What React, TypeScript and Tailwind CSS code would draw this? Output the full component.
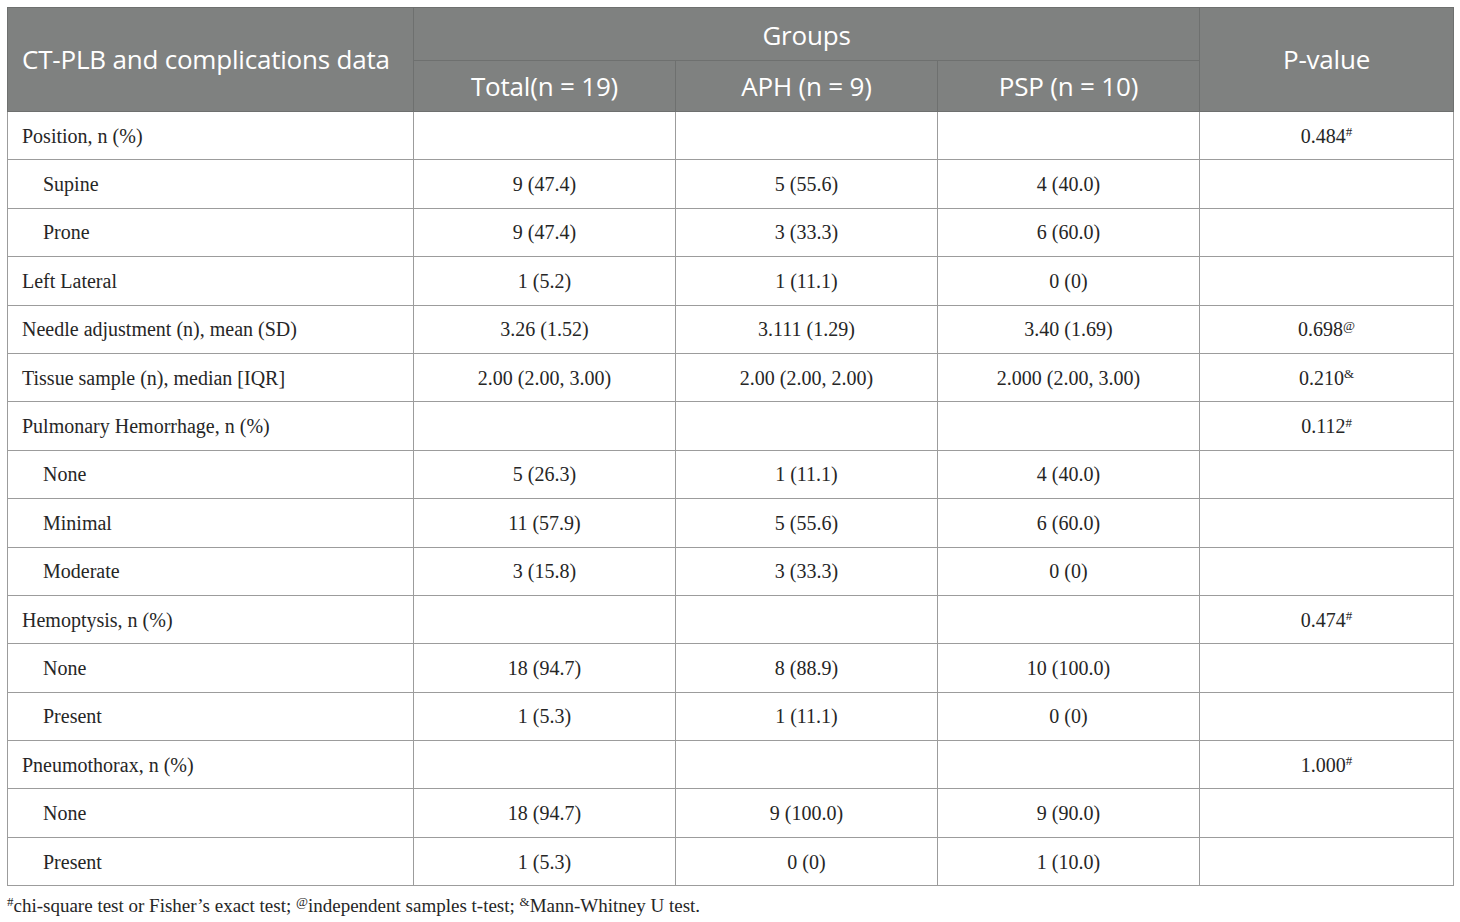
import type { ReactElement } from 'react';

type Row = {
    label: string;
    indent?: boolean;
    total?: string;
    aph?: string;
    psp?: string;
    p?: string;
    mark?: string;
};

const rows: Row[] = [
    { label: 'Position, n (%)', p: '0.484', mark: '#' },
    { label: 'Supine', indent: true, total: '9 (47.4)', aph: '5 (55.6)', psp: '4 (40.0)' },
    { label: 'Prone', indent: true, total: '9 (47.4)', aph: '3 (33.3)', psp: '6 (60.0)' },
    { label: 'Left Lateral', total: '1 (5.2)', aph: '1 (11.1)', psp: '0 (0)' },
    { label: 'Needle adjustment (n), mean (SD)', total: '3.26 (1.52)', aph: '3.111 (1.29)', psp: '3.40 (1.69)', p: '0.698', mark: '@' },
    { label: 'Tissue sample (n), median [IQR]', total: '2.00 (2.00, 3.00)', aph: '2.00 (2.00, 2.00)', psp: '2.000 (2.00, 3.00)', p: '0.210', mark: '&' },
    { label: 'Pulmonary Hemorrhage, n (%)', p: '0.112', mark: '#' },
    { label: 'None', indent: true, total: '5 (26.3)', aph: '1 (11.1)', psp: '4 (40.0)' },
    { label: 'Minimal', indent: true, total: '11 (57.9)', aph: '5 (55.6)', psp: '6 (60.0)' },
    { label: 'Moderate', indent: true, total: '3 (15.8)', aph: '3 (33.3)', psp: '0 (0)' },
    { label: 'Hemoptysis, n (%)', p: '0.474', mark: '#' },
    { label: 'None', indent: true, total: '18 (94.7)', aph: '8 (88.9)', psp: '10 (100.0)' },
    { label: 'Present', indent: true, total: '1 (5.3)', aph: '1 (11.1)', psp: '0 (0)' },
    { label: 'Pneumothorax, n (%)', p: '1.000', mark: '#' },
    { label: 'None', indent: true, total: '18 (94.7)', aph: '9 (100.0)', psp: '9 (90.0)' },
    { label: 'Present', indent: true, total: '1 (5.3)', aph: '0 (0)', psp: '1 (10.0)' }
];

const headCell = 'border border-[#6e706f] bg-[#7f8180] font-normal text-center align-middle';
const bodyCell = 'border border-[#9c9c9c] text-center align-middle';

export default function App(): ReactElement {
    return (
        <div className="min-h-[922px] w-[1460px] bg-white pt-[7px] pl-[7px] text-[#262626]">
            <table className="w-[1446px] table-fixed border-collapse">
                <colgroup>
                    <col className="w-[406px]" />
                    <col className="w-[262px]" />
                    <col className="w-[262px]" />
                    <col className="w-[262px]" />
                    <col className="w-[254px]" />
                </colgroup>
                <thead className="font-['Open_Sans',sans-serif] text-[26px] tracking-[-0.2px] text-white">
                    <tr className="h-[53px]">
                        <th rowSpan={2} className={`${headCell} pl-[14px] text-left`}>
                            CT-PLB and complications data
                        </th>
                        <th colSpan={3} className={`${headCell} pt-[2px]`}>
                            Groups
                        </th>
                        <th rowSpan={2} className={headCell}>
                            P-value
                        </th>
                    </tr>
                    <tr className="h-[51px]">
                        <th className={headCell}>Total(n = 19)</th>
                        <th className={headCell}>APH (n = 9)</th>
                        <th className={headCell}>PSP (n = 10)</th>
                    </tr>
                </thead>
                <tbody className="font-['Liberation_Serif',serif] text-[20px]">
                    {rows.map((r, i) => (
                        <tr key={i} className="h-[48.4px]">
                            <td className={`border border-[#9c9c9c] align-middle ${r.indent ? 'pl-[35px]' : 'pl-[14px]'}`}>
                                {r.label}
                            </td>
                            <td className={bodyCell}>{r.total}</td>
                            <td className={bodyCell}>{r.aph}</td>
                            <td className={bodyCell}>{r.psp}</td>
                            <td className={bodyCell}>
                                {r.p}
                                {r.mark ? <sup className="text-[13px]">{r.mark}</sup> : null}
                            </td>
                        </tr>
                    ))}
                </tbody>
            </table>
            <p className="mt-[6px] font-['Liberation_Serif',serif] text-[19px]">
                <sup className="text-[13px]">#</sup>chi-square test or Fisher’s exact test; <sup className="text-[13px]">@</sup>
                independent samples t-test; <sup className="text-[13px]">&amp;</sup>Mann-Whitney U test.
            </p>
        </div>
    );
}
